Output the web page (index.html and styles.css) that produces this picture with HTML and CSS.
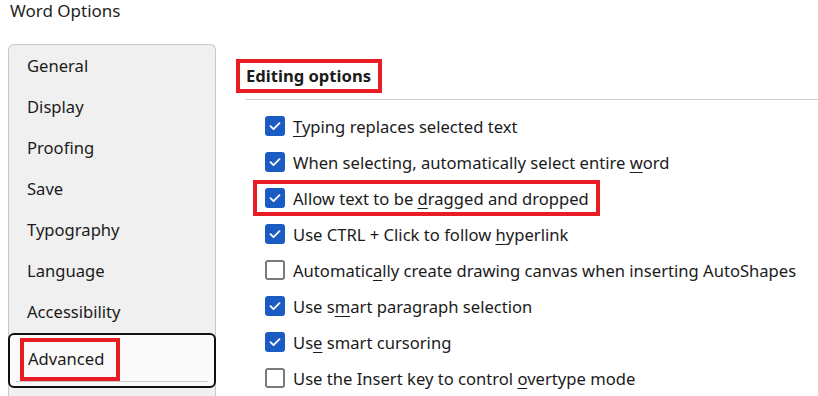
FILE: index.html
```html
<!DOCTYPE html>
<html lang="en">
<head>
  <meta charset="UTF-8" />
  <title>Word Options</title>
  <meta name="viewport" content="width=device-width, initial-scale=1.0" />
  <link rel="stylesheet" href="styles.css">
</head>
<body>

  <div class="title">Word Options</div>

  <div class="dialog">
    <ul class="nav">
      <li>General</li>
      <li>Display</li>
      <li>Proofing</li>
      <li>Save</li>
      <li>Typography</li>
      <li>Language</li>
      <li>Accessibility</li>
      <li class="active"><span class="mark">Advanced</span></li>
    </ul>

    <div class="content">
      <div class="section-head">
        <h3 class="mark">Editing options</h3>
      </div>

      <div class="options">
        <label class="opt"><span class="box on"></span><span><u>T</u>yping replaces selected text</span></label>
        <label class="opt"><span class="box on"></span><span>When selecting, automatically select entire <u>w</u>ord</span></label>
        <label class="opt mark"><span class="box on"></span><span>Allow text to be <u>d</u>ragged and dropped</span></label>
        <label class="opt"><span class="box on"></span><span>Use CTRL + Click to follow <u>h</u>yperlink</span></label>
        <label class="opt"><span class="box"></span><span>Automatic<u>a</u>lly create drawing canvas when inserting AutoShapes</span></label>
        <label class="opt"><span class="box on"></span><span>Use s<u>m</u>art paragraph selection</span></label>
        <label class="opt"><span class="box on"></span><span>Us<u>e</u> smart cursoring</span></label>
        <label class="opt"><span class="box"></span><span>Use the Insert key to control <u>o</u>vertype mode</span></label>
      </div>
    </div>
  </div>

</body>
</html>
```

FILE: styles.css
```css
body {
  font-family: "Noto Sans", "Open Sans", sans-serif;
  font-size: 16.6px;
  color: #1b1b1b;
  margin: 0;
  background: #fff;
  height: 396px;
  overflow: hidden;
}

.title {
  padding: 0 0 0 10px;
  height: 44px;
  line-height: 22px;
  font-size: 17px;
  color: #1f1f1f;
}

.dialog {
  display: flex;
  gap: 20px;
  height: 352px;
  overflow: hidden;
}

.nav {
  list-style: none;
  margin: 0 0 0 8px;
  padding: 0;
  width: 206px;
  background: #f0f0f0;
  border: 1px solid #c8c8c8;
  border-bottom: none;
  border-radius: 6px 6px 0 0;
}

.nav li {
  height: 41px;
  line-height: 41px;
  padding-left: 18px;
}

.nav li.active {
  height: 51px;
  line-height: 51px;
  margin: 1px -1px 0;
  padding-left: 10px;
  background: #fafafa;
  border: 2px solid #111;
  border-radius: 6px;
  position: relative;
}

.nav li.active::after {
  content: "";
  position: absolute;
  left: 6px;
  right: 6px;
  bottom: 4px;
  border-bottom: 1px solid #c8c8c8;
}

.nav li.active .mark {
  display: inline-block;
  height: 43px;
  line-height: 42px;
  padding: 0 16px 0 8px;
  margin-top: 3px;
  vertical-align: top;
}

.mark {
  outline: 4px solid #e81c25;
  outline-offset: -4px;
}

.content {
  flex: 1;
}

.section-head {
  padding-top: 15px;
  border-bottom: 1px solid #d0d0d0;
  margin-left: 10px;
  padding-bottom: 6px;
}

.section-head h3 {
  display: inline-block;
  margin: 0 0 0 -10px;
  height: 34px;
  line-height: 34px;
  padding: 0 11px 0 10px;
  font-size: 16.6px;
  font-weight: bold;
}

.options {
  display: flex;
  flex-direction: column;
  align-items: flex-start;
  padding-top: 8px;
}

.opt {
  display: flex;
  align-items: center;
  gap: 8px;
  height: 36px;
  padding: 0 11px 0 12px;
  margin-left: 17px;
  white-space: nowrap;
}

.opt u {
  text-underline-offset: 3px;
}

.box {
  width: 20px;
  height: 20px;
  box-sizing: border-box;
  border: 2px solid #7a7a7a;
  border-radius: 3px;
  background: #fff;
  flex: none;
}

.box.on {
  border: none;
  background: #1b5cc4 url("data:image/svg+xml,%3Csvg xmlns='http://www.w3.org/2000/svg' width='20' height='20'%3E%3Cpath d='M5.5 10.2l3 3 6-6' fill='none' stroke='%23fff' stroke-width='1.8' stroke-linecap='round' stroke-linejoin='round'/%3E%3C/svg%3E") center no-repeat;
}
```
